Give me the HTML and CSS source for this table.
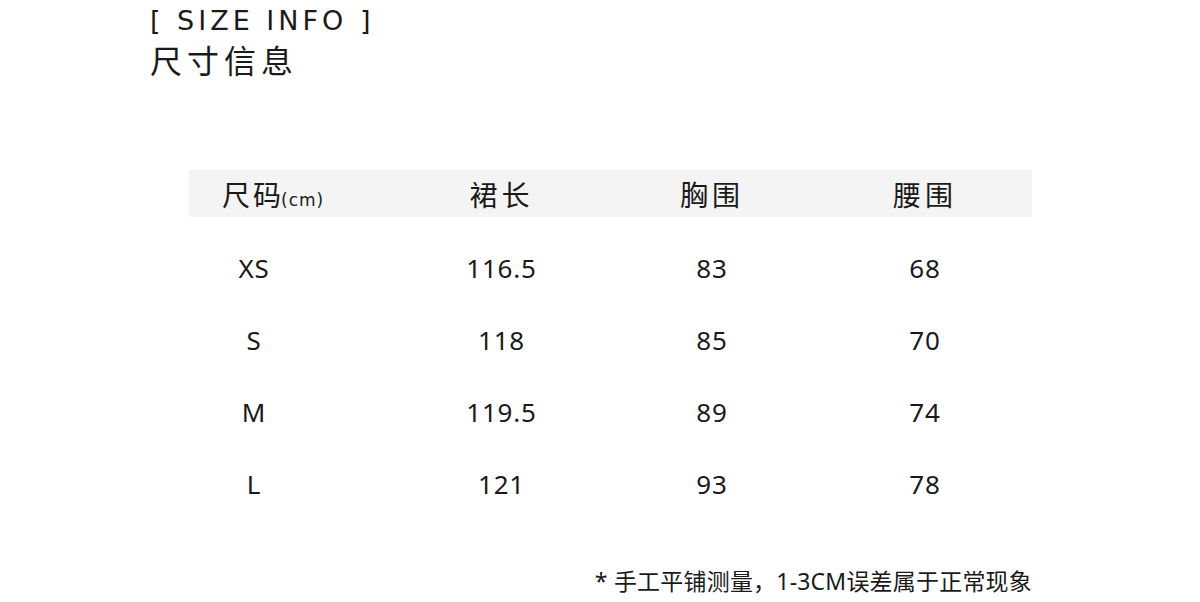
FILE: index.html
```html
<!DOCTYPE html>
<html lang="zh">
<head>
<meta charset="utf-8">
<link rel="stylesheet" href="styles.css">
</head>
<body>
<div class="page">
  <header class="title">
    <div class="title-en">[ SIZE INFO ]</div>
    <div class="title-cn">尺寸信息</div>
  </header>
  <section class="table">
    <div class="row head">
      <div class="cell first">尺码<span class="unit">(cm)</span></div>
      <div class="cell">裙长</div>
      <div class="cell">胸围</div>
      <div class="cell">腰围</div>
    </div>
    <div class="row">
      <div class="cell first">XS</div>
      <div class="cell">116.5</div>
      <div class="cell">83</div>
      <div class="cell">68</div>
    </div>
    <div class="row">
      <div class="cell first">S</div>
      <div class="cell">118</div>
      <div class="cell">85</div>
      <div class="cell">70</div>
    </div>
    <div class="row">
      <div class="cell first">M</div>
      <div class="cell">119.5</div>
      <div class="cell">89</div>
      <div class="cell">74</div>
    </div>
    <div class="row">
      <div class="cell first">L</div>
      <div class="cell">121</div>
      <div class="cell">93</div>
      <div class="cell">78</div>
    </div>
  </section>
  <footer class="note">* 手工平铺测量，1-3CM误差属于正常现象</footer>
</div>
</body>
</html>
```
FILE: styles.css
```css
html, body {
  margin: 0;
  padding: 0;
  background: #ffffff;
}
.page {
  width: 1200px;
  height: 602px;
  overflow: hidden;
  color: #1a1a1a;
  font-family: "Noto Sans", "Noto Sans CJK SC", sans-serif;
  display: flex;
  flex-direction: column;
}
.title {
  padding: 4px 0 0 150px;
}
.title-en {
  font-family: "DejaVu Sans", sans-serif;
  font-size: 27px;
  line-height: 34px;
  letter-spacing: 4px;
  font-weight: 400;
}
.title-cn {
  font-family: "Noto Sans CJK SC", sans-serif;
  font-size: 32px;
  line-height: 42px;
  letter-spacing: 5px;
  margin-top: 0;
}
.table {
  margin: 90px 0 0 189px;
  width: 843px;
}
.row {
  display: grid;
  grid-template-columns: 208px 209px 212px 214px;
  height: 72px;
  align-items: center;
  font-size: 26px;
  letter-spacing: 0.8px;
}
.row.head {
  height: 47px;
  background: #f4f4f4;
  margin-bottom: 15px;
  font-family: "Noto Sans CJK SC", sans-serif;
  font-size: 28px;
  letter-spacing: 4px;
}
.cell {
  text-align: center;
}
.row .first {
  padding-right: 78px;
}
.row.head .first {
  text-align: left;
  padding: 0 0 0 33px;
  letter-spacing: 3px;
}
.unit {
  font-family: "DejaVu Sans", sans-serif;
  font-size: 17px;
  letter-spacing: 1px;
  margin-left: -3px;
}
.note {
  margin-top: 46px;
  padding-right: 168px;
  text-align: right;
  font-family: "Noto Sans", "Noto Sans CJK SC", sans-serif;
  font-size: 23px;
  line-height: 30px;
  letter-spacing: 0.2px;
}
```
